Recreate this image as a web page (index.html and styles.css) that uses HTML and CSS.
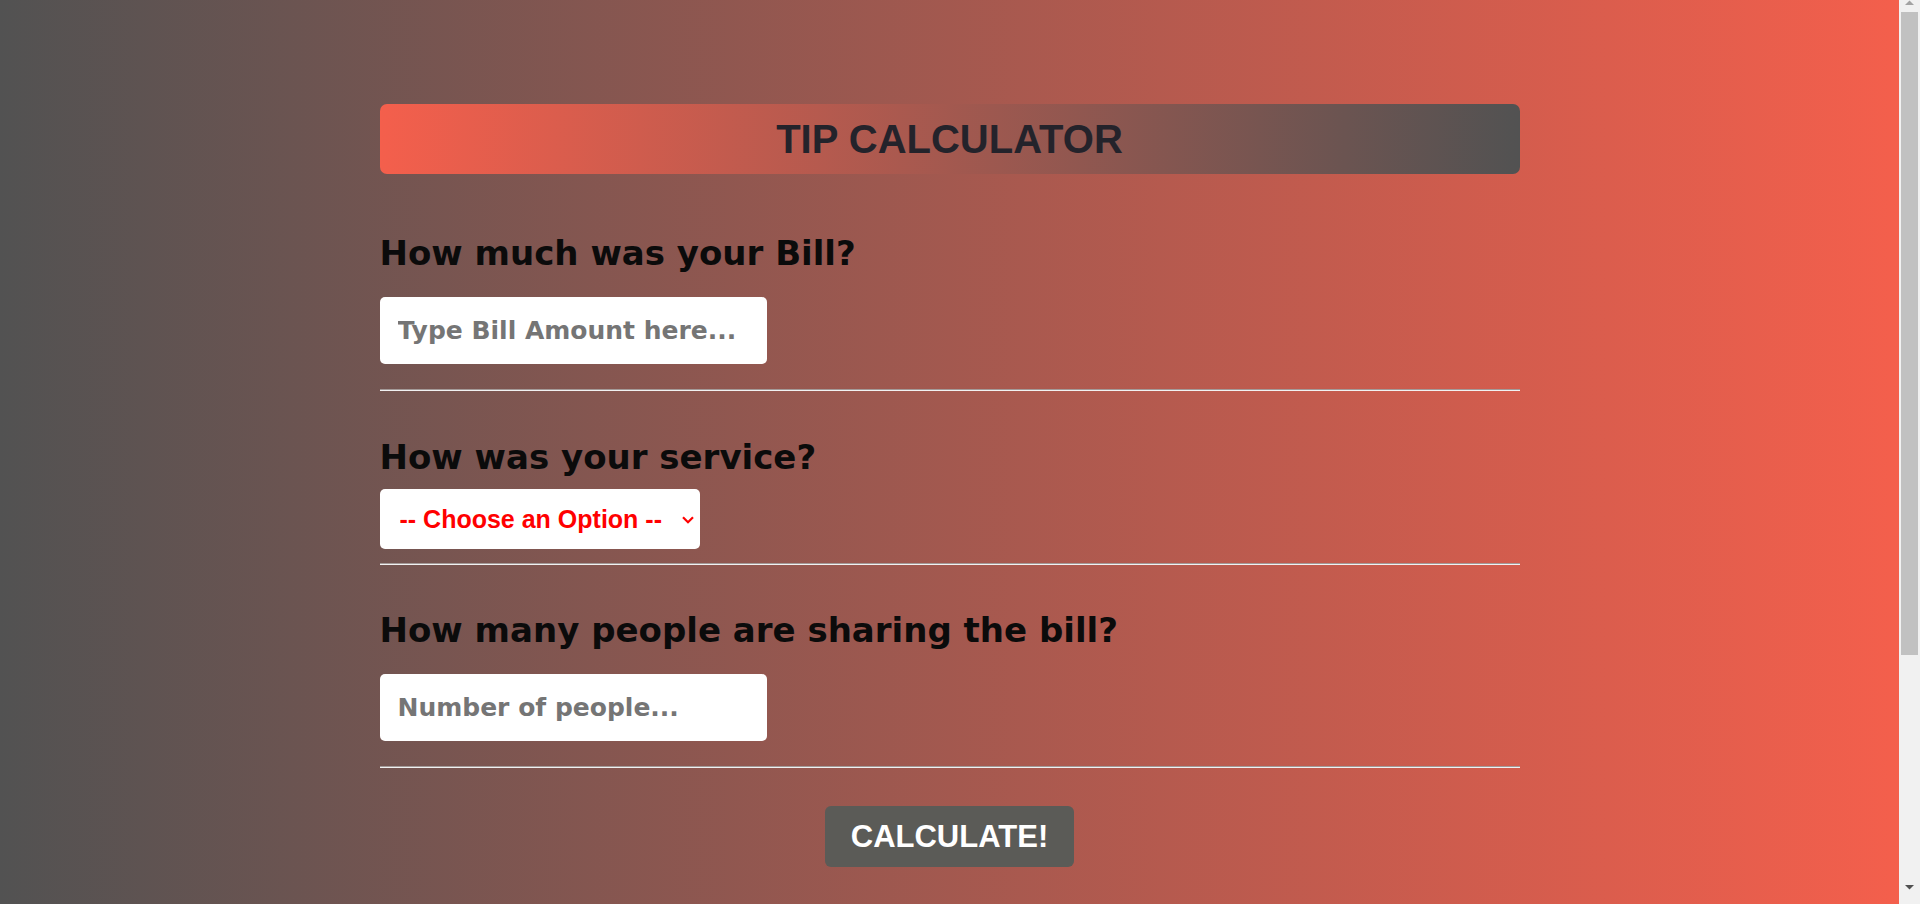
FILE: index.html
```html
<!DOCTYPE html>
<html lang="en">
<head>
<meta charset="utf-8">
<title>Tip Calculator</title>
<link rel="stylesheet" href="styles.css">
</head>
<body>
<main class="viewport">
  <div class="page">
    <header class="banner">
      <h1 class="banner-title">TIP CALCULATOR</h1>
    </header>

    <h2 class="question q-bill">How much was your Bill?</h2>
    <input class="field" type="text" placeholder="Type Bill Amount here...">
    <hr class="rule">

    <h2 class="question q-service">How was your service?</h2>
    <div class="select-wrap">
      <select class="choice">
        <option>-- Choose an Option --</option>
        <option>30% - Outstanding</option>
        <option>20% - Good</option>
        <option>15% - It was OK</option>
        <option>10% - Bad</option>
        <option>5% - Terrible</option>
      </select>
      <svg class="chevron" width="12" height="8" viewBox="0 0 12 8" aria-hidden="true">
        <path d="M1 1.2 L6 6.2 L11 1.2" fill="none" stroke="#ff0000" stroke-width="2.2"/>
      </svg>
    </div>
    <hr class="rule rule-tight">

    <h2 class="question q-people">How many people are sharing the bill?</h2>
    <input class="field" type="text" placeholder="Number of people...">
    <hr class="rule">

    <div class="actions">
      <button class="calc" type="button">CALCULATE!</button>
    </div>
  </div>
</main>
<div class="scrollbar" aria-hidden="true">
  <svg class="sb-arrow sb-up" width="9" height="5" viewBox="0 0 9 5"><path d="M0 5 L4.5 0.5 L9 5 Z" fill="#a3a3a3"/></svg>
  <div class="sb-thumb"></div>
  <div class="sb-track-rest"></div>
  <svg class="sb-arrow sb-down" width="9" height="5" viewBox="0 0 9 5"><path d="M0 0 L4.5 4.5 L9 0 Z" fill="#505050"/></svg>
</div>
</body>
</html>
```

FILE: styles.css
```css
html, body {
  margin: 0;
  padding: 0;
}

body {
  height: 904px;
  overflow: hidden;
  display: flex;
  font-family: "DejaVu Sans", Verdana, sans-serif;
}

.viewport {
  flex: 1;
  background: linear-gradient(to right, #525252, #f45f4c);
}

.page {
  width: 1140px;
  margin: 0 auto;
  padding-top: 104px;
  display: flex;
  flex-direction: column;
  align-items: flex-start;
}

.banner {
  align-self: stretch;
  height: 70px;
  border-radius: 7px;
  background: linear-gradient(to right, #f45f4c, #525252);
  display: flex;
  align-items: center;
  justify-content: center;
}

.banner-title {
  margin: 0;
  font-family: "Liberation Sans", Arial, sans-serif;
  font-weight: bold;
  font-size: 40px;
  line-height: 46px;
  color: #24232b;
}

.question {
  margin: 0;
  font-family: "DejaVu Sans", Verdana, sans-serif;
  font-weight: bold;
  font-size: 34px;
  line-height: 40px;
  color: #0b0b0b;
}

.q-bill { margin-top: 59px; margin-bottom: 24px; }
.q-service { margin-top: 46px; margin-bottom: 12px; }
.q-people { margin-top: 45px; margin-bottom: 24px; }

.field {
  box-sizing: border-box;
  width: 387px;
  height: 67px;
  border: none;
  border-radius: 5px;
  background: #fff;
  padding: 0 18px;
  font-family: "DejaVu Sans", Verdana, sans-serif;
  font-weight: bold;
  font-size: 25px;
  color: #333;
  outline: none;
}

.field::placeholder {
  color: #757575;
}

.select-wrap {
  position: relative;
  width: 320px;
  height: 60px;
}

.choice {
  appearance: none;
  -webkit-appearance: none;
  box-sizing: border-box;
  width: 320px;
  height: 60px;
  border: none;
  border-radius: 5px;
  background-color: #fff;
  padding: 0 30px 0 20px;
  font-family: "Liberation Sans", Arial, sans-serif;
  font-weight: bold;
  font-size: 25px;
  color: #ff0000;
  outline: none;
}

.chevron {
  position: absolute;
  right: 6px;
  top: 27px;
  pointer-events: none;
}

.rule {
  align-self: stretch;
  margin: 25px 0 0 0;
  height: 0;
  border-style: solid;
  border-width: 1px 0;
  border-top-color: #a39a98;
  border-bottom-color: #f1f1f1;
}

.rule-tight {
  margin-top: 14px;
}

.actions {
  align-self: stretch;
  display: flex;
  justify-content: center;
  margin-top: 38px;
}

.calc {
  width: 249px;
  height: 61px;
  border: none;
  border-radius: 6px;
  background: #5b5b57;
  color: #fff;
  font-family: "Liberation Sans", Arial, sans-serif;
  font-weight: bold;
  font-size: 31px;
  cursor: pointer;
}

.scrollbar {
  width: 21px;
  flex: none;
  background: #f1f1f1;
  display: flex;
  flex-direction: column;
  align-items: center;
}

.sb-arrow {
  flex: none;
}

.sb-up {
  margin-top: 0;
}

.sb-thumb {
  width: 17px;
  height: 643px;
  margin-top: 7px;
  background: #c1c1c1;
  flex: none;
}

.sb-track-rest {
  flex: 1;
}

.sb-down {
  margin-bottom: 14px;
}
```
